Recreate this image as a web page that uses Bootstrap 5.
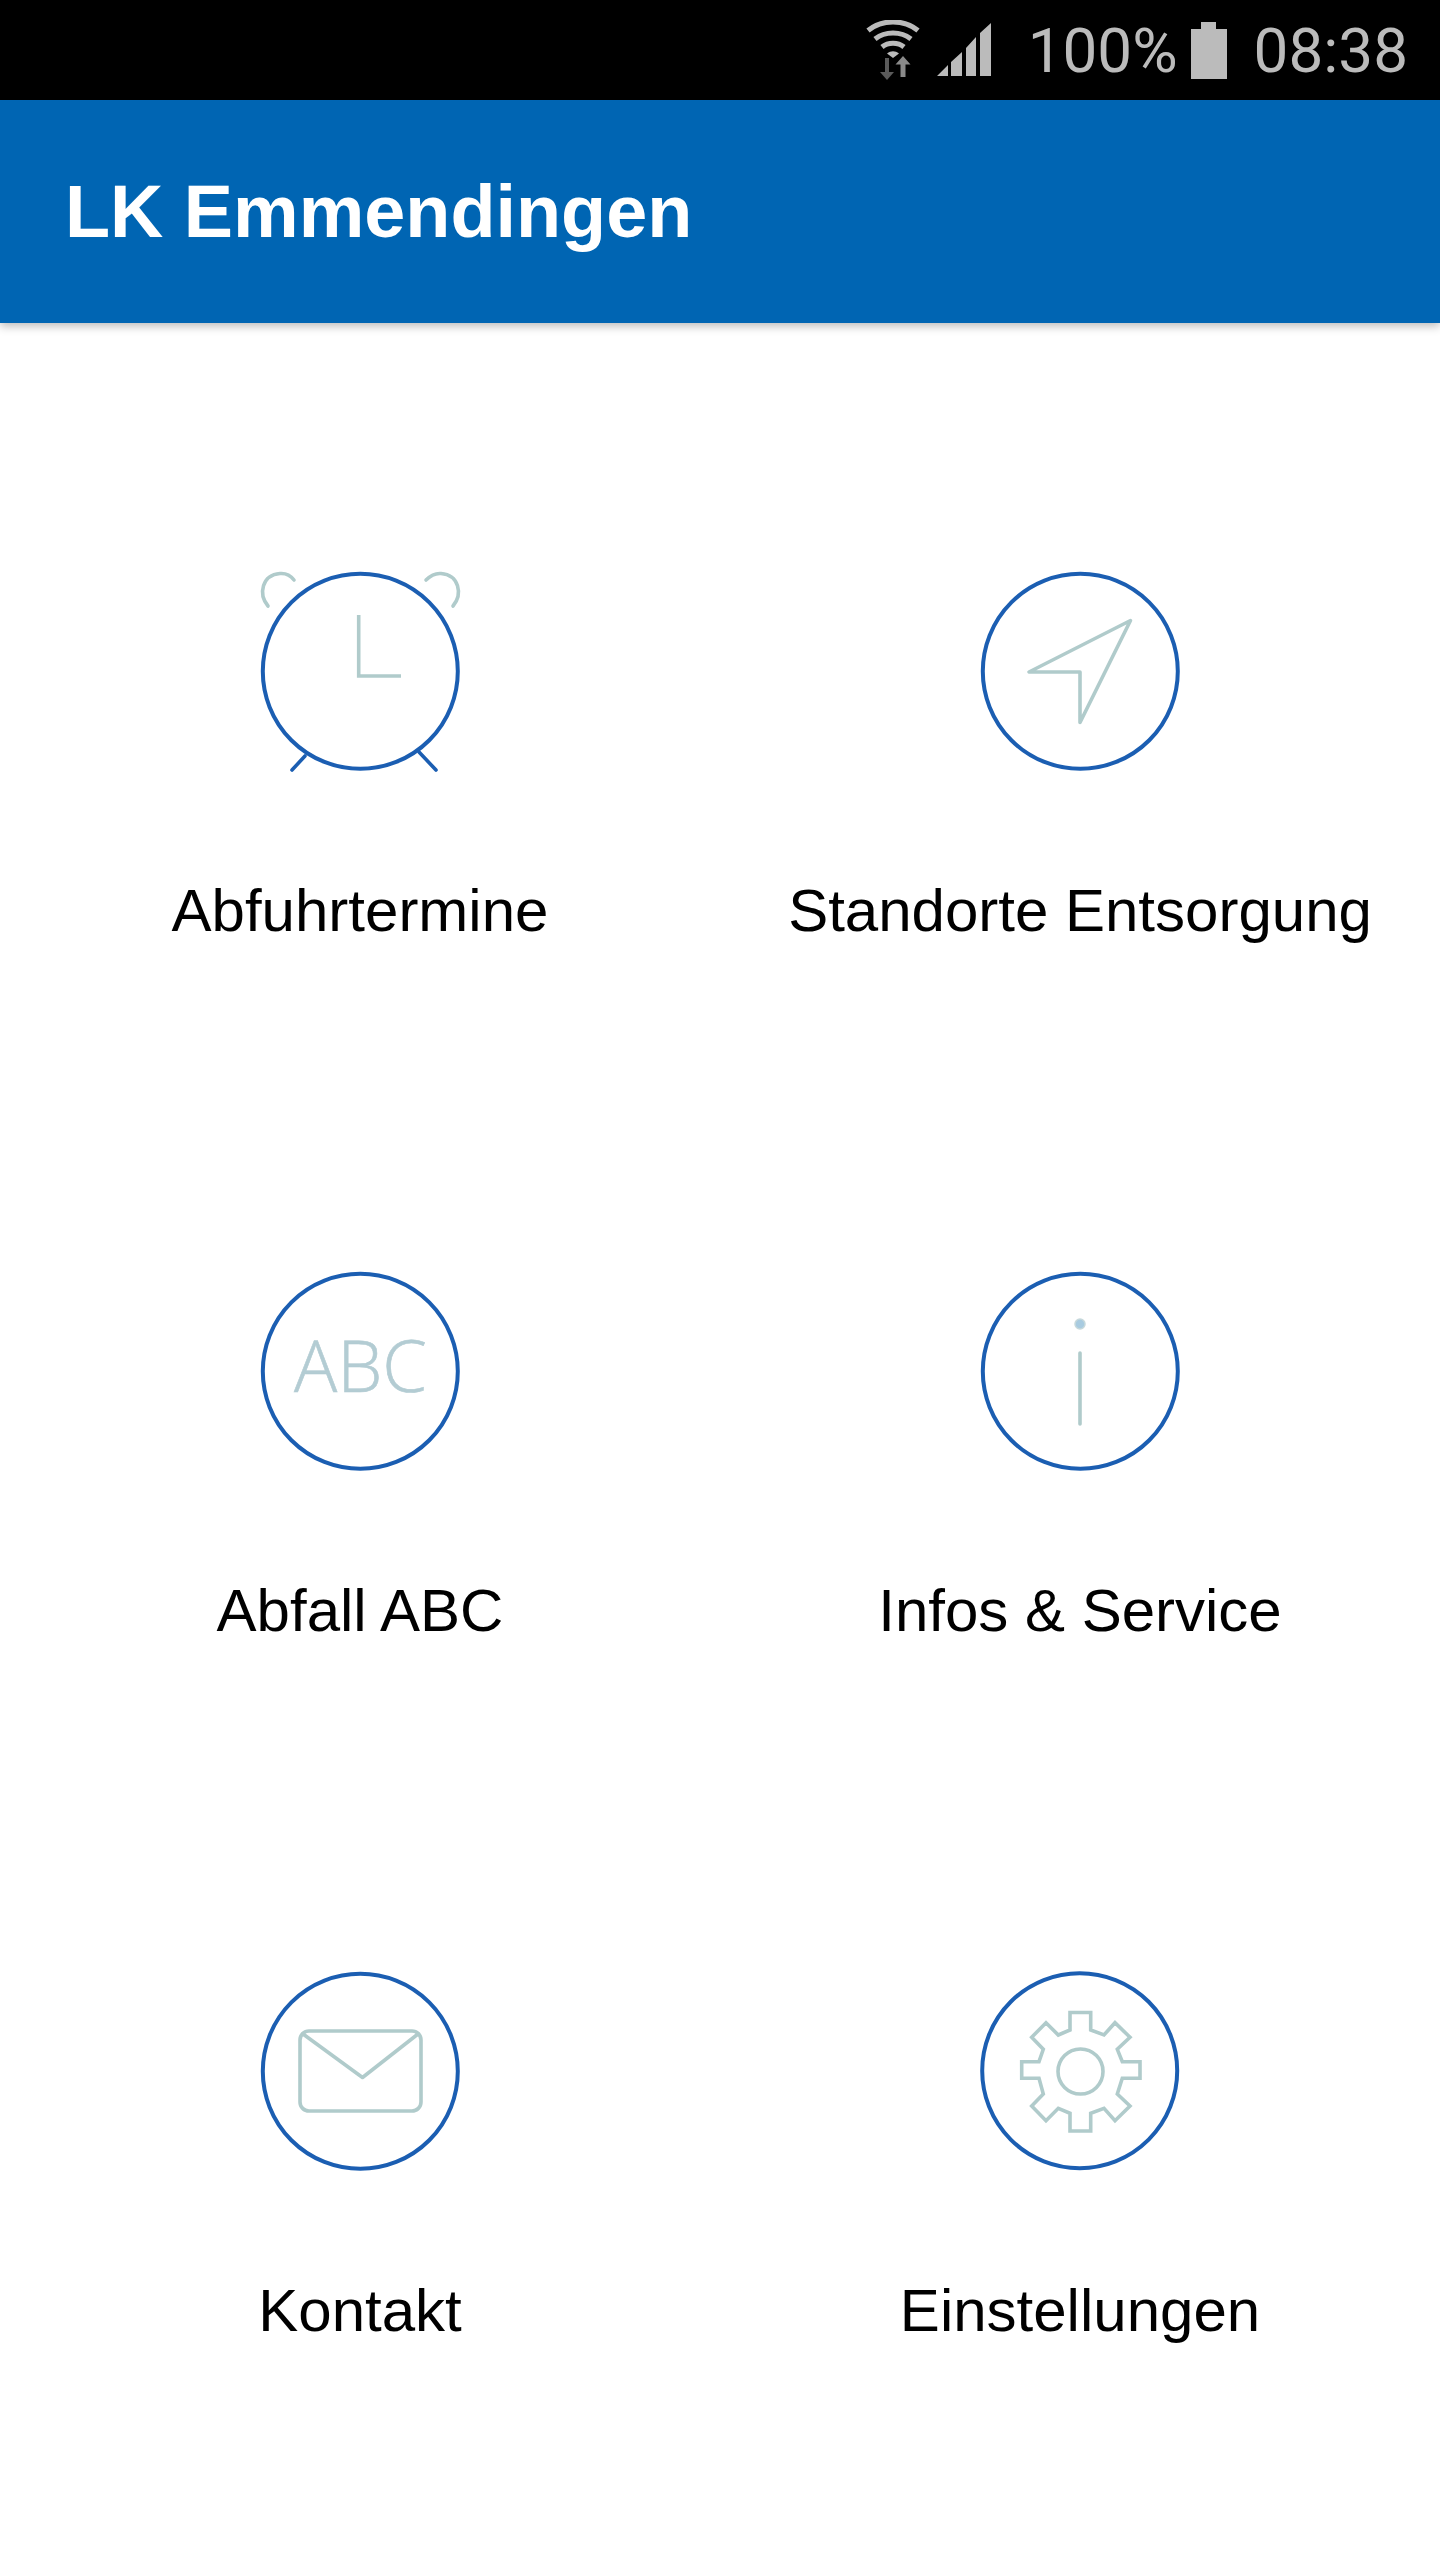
<!DOCTYPE html>
<html lang="de">
<head>
<meta charset="utf-8">
<title>LK Emmendingen</title>
<link rel="stylesheet" href="https://cdn.jsdelivr.net/npm/bootstrap@5.3.0/dist/css/bootstrap.min.css">
<style>
body{background:#fff;font-family:"Liberation Sans",Arial,sans-serif;color:#000}
.status-strip{height:100px;background:#000;color:#bbb;padding-right:32px;font-family:Roboto,sans-serif;font-weight:400;font-size:62px;line-height:1}
.status-strip span{display:block;margin-top:2px}
.st-wifi{width:54px;height:60px;margin-right:17px}
.st-signal{width:54px;height:54px;margin-right:37px}
.st-batt{width:36px;height:57px;margin-left:13px;margin-right:27px}
.app-head{height:223px;background:#0065b3;padding:0 0 0 65px;box-shadow:0 3px 9px rgba(0,0,0,.28);position:relative}
.app-title{font-size:73.800px;font-weight:700;color:#fff;line-height:1;margin:0}
.tile{height:700px;padding-top:227px}
.tile-art{width:240px;height:240px;display:block;margin-bottom:85px}
.tile-name{font-size:60px;line-height:72px;white-space:nowrap}
.ring{fill:none;stroke:#1b5eb2;stroke-width:4}
.ln{fill:none;stroke:#b0cbcb;stroke-width:3.600;stroke-linecap:round;stroke-linejoin:round}
.ln-sharp{stroke-linejoin:miter;stroke-linecap:butt}
.blue-ln{fill:none;stroke:#1b5eb2;stroke-width:3.600;stroke-linecap:round}
.abc{font-family:"Open Sans",sans-serif;font-weight:300;font-size:72px;fill:#b3ccd3;stroke:#b3ccd3;stroke-width:.6}
</style>
</head>
<body>
<div class="status-strip d-flex justify-content-end align-items-center">
  <svg class="st-wifi" viewBox="0 0 54 60" aria-hidden="true">
    <path d="M2 10.500C16-1 38-1 52 10.500" fill="none" stroke="#bbb" stroke-width="5"/>
    <path d="M9 19C19 11 35 11 45 19" fill="none" stroke="#bbb" stroke-width="5"/>
    <path d="M16 27C22 22 32 22 38 27" fill="none" stroke="#bbb" stroke-width="5"/>
    <path d="M21 33.500C25 30.500 29 30.500 33 33.500L27 38Z" fill="#bbb"/>
    <path d="M19 38V52H14L21 60L28 52H23V38Z" fill="#5a5a5a"/>
    <path d="M37 36L29.500 44.500H34.500V57H39.500V44.500H44.500Z" fill="#8a8a8a"/>
  </svg>
  <svg class="st-signal" viewBox="0 0 54 54" aria-hidden="true">
    <path d="M0 53L11 42V53ZM14 53V39L25 29V53ZM29 53V25L39 14V53ZM43 53V10L54 0V53Z" fill="#bbb"/>
  </svg>
  <span>100%</span>
  <svg class="st-batt" viewBox="0 0 36 57" aria-hidden="true">
    <path d="M10 0H25V7H36V57H0V7H10Z" fill="#bbb"/>
  </svg>
  <span>08:38</span>
</div>

<header class="navbar app-head">
  <h1 class="app-title">LK Emmendingen</h1>
</header>

<main class="container-fluid p-0">
  <div class="row g-0">
    <div class="col-6 tile d-flex flex-column align-items-center">
      <svg class="tile-art" viewBox="0 0 240 240" aria-hidden="true">
        <path class="ln" d="M28 56C18 44 22 25 40 23.500C46 23 51 26 54 30"/>
        <path class="ln" d="M213 56C223 44 219 25 201 23.500C195 23 190 26 186 30"/>
        <path class="ln ln-sharp" d="M118.700 65V126H161"/>
        <path class="blue-ln" d="M65 206L52 220M179 202L196 220"/>
        <circle class="ring" cx="120.300" cy="121.300" r="97.500"/>
      </svg>
      <div class="tile-name">Abfuhrtermine</div>
    </div>
    <div class="col-6 tile d-flex flex-column align-items-center">
      <svg class="tile-art" viewBox="0 0 240 240" aria-hidden="true">
        <circle class="ring" cx="120.300" cy="121.300" r="97.500"/>
        <path class="ln" d="M170.500 70.500L69 122H120V172.500Z"/>
      </svg>
      <div class="tile-name">Standorte Entsorgung</div>
    </div>
    <div class="col-6 tile d-flex flex-column align-items-center">
      <svg class="tile-art" viewBox="0 0 240 240" aria-hidden="true">
        <circle class="ring" cx="120.300" cy="121.300" r="97.500"/>
        <text class="abc" x="120.500" y="141.500" text-anchor="middle">ABC</text>
      </svg>
      <div class="tile-name">Abfall ABC</div>
    </div>
    <div class="col-6 tile d-flex flex-column align-items-center">
      <svg class="tile-art" viewBox="0 0 240 240" aria-hidden="true">
        <circle class="ring" cx="120.300" cy="121.300" r="97.500"/>
        <circle cx="120" cy="74" r="5" fill="#a8cbe0" stroke="#c6d8db" stroke-width="1.500"/>
        <path class="ln" d="M120 103V174"/>
      </svg>
      <div class="tile-name">Infos &amp; Service</div>
    </div>
    <div class="col-6 tile d-flex flex-column align-items-center">
      <svg class="tile-art" viewBox="0 0 240 240" aria-hidden="true">
        <circle class="ring" cx="120.300" cy="121.300" r="97.500"/>
        <rect class="ln" x="60" y="81" width="121" height="80" rx="9"/>
        <path class="ln" d="M63 84L122.500 127.500L178 84"/>
      </svg>
      <div class="tile-name">Kontakt</div>
    </div>
    <div class="col-6 tile d-flex flex-column align-items-center">
      <svg class="tile-art" viewBox="0 0 240 240" aria-hidden="true">
        <circle class="ring" cx="119.700" cy="120.700" r="97.500"/>
        <circle class="ln" cx="120.500" cy="121.500" r="22.500"/>
        <path class="ln ln-sharp" d="M110 62.500H130.700V80L144 85L155 72.700L170 87.300L157.300 99.300L162.300 111.700H180V128.300H162.300L157.300 144L170 156L155 170.700L144 158.300L130.700 163.300V181H110V163.300L98.300 158.300L86 170.700L71.700 156L83.300 144L79 128.300H61.700V111.700H79L83.300 99.300L71.700 87.300L86 72.700L98.300 85L110 80Z"/>
      </svg>
      <div class="tile-name">Einstellungen</div>
    </div>
  </div>
</main>
</body>
</html>
